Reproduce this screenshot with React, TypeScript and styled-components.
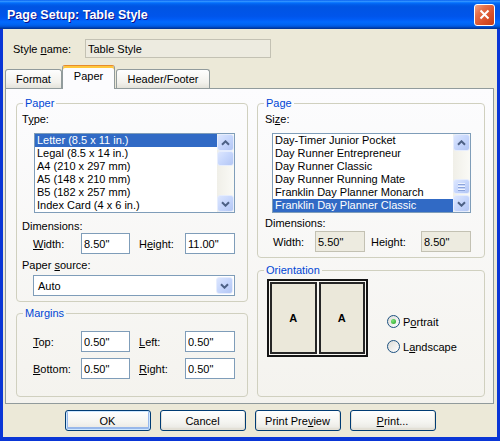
import React from "react"
import styled, { createGlobalStyle } from "styled-components"

const GlobalStyle = createGlobalStyle`
    html, body { margin: 0; padding: 0; }
    body {
        font-family: "Liberation Sans", Arial, sans-serif;
        font-size: 11px;
        color: #000;
    }
    *, *::before, *::after { box-sizing: border-box; }
`

const paperTypes = [
    "Letter (8.5 x 11 in.)",
    "Legal (8.5 x 14 in.)",
    "A4 (210 x 297 mm)",
    "A5 (148 x 210 mm)",
    "B5 (182 x 257 mm)",
    "Index Card (4 x 6 in.)",
]

const pageSizes = [
    "Day-Timer Junior Pocket",
    "Day Runner Entrepreneur",
    "Day Runner Classic",
    "Day Runner Running Mate",
    "Franklin Day Planner Monarch",
    "Franklin Day Planner Classic",
]

// window chrome
const Window = styled.div`
    width: 500px;
    height: 441px;
    display: flex;
    flex-direction: column;
    background: #0A36D6;
`

const TitleBar = styled.div`
    height: 29px;
    flex: none;
    display: flex;
    align-items: center;
    justify-content: space-between;
    padding: 0 5px 0 7px;
    background: linear-gradient(to bottom, #0058EE 0%, #3593FF 4%, #288EFF 6%, #127DFF 8%, #036FFC 10%,
        #0262EE 14%, #0057E5 20%, #0054E3 24%, #0055EB 56%, #005BF5 66%, #026AFE 76%,
        #0062EF 86%, #0052D6 92%, #0040AB 96%, #003092 100%);
`

const Title = styled.span`
    color: #fff;
    font-weight: bold;
    font-size: 12.5px;
    text-shadow: 1px 1px #0F1089;
`

const CloseButton = styled.div`
    width: 21px;
    height: 22px;
    border: 1px solid #fff;
    border-radius: 3px;
    display: grid;
    place-items: center;
    background: linear-gradient(135deg, #F3A488 0%, #E4704A 30%, #D9502A 65%, #C43C15 100%);
`

const Body = styled.div`
    flex: 1;
    margin: 0 3px 4px;
    background: #ECE9D8;
    display: flex;
    flex-direction: column;
`

const StyleRow = styled.div`
    display: flex;
    align-items: center;
    padding: 10px 0 0 10px;
`

const StyleLabel = styled.span`
    width: 72px;
`

const Key = styled.u`
    text-decoration: underline;
    text-underline-offset: 1px;
`

const TextBox = styled.input<{ $w: number; $disabled?: boolean; $h?: number }>`
    width: ${p => p.$w}px;
    height: ${p => p.$h ?? 21}px;
    margin: 0;
    padding: 0 2px;
    font: inherit;
    color: #000;
    border: 1px solid ${p => p.$disabled ? "#C3C1B3" : "#7F9DB9"};
    background: ${p => p.$disabled ? "#EDEBE0" : "#fff"};
    outline: none;
`

// tabs
const TabStrip = styled.div`
    height: 24px;
    margin: 7px 0 -1px;
    padding-left: 2px;
    display: flex;
    align-items: flex-end;
`

const Tab = styled.div<{ $w: number; $active?: boolean; $ml?: number }>`
    position: relative;
    z-index: ${p => p.$active ? 1 : 0};
    width: ${p => p.$w}px;
    height: ${p => p.$active ? 24 : 19}px;
    margin-bottom: ${p => p.$active ? 0 : 1}px;
    margin-left: ${p => p.$ml ?? 0}px;
    display: flex;
    align-items: center;
    justify-content: center;
    padding-bottom: ${p => p.$active ? 3 : 0}px;
    border: 1px solid #919B9C;
    border-bottom: none;
    border-radius: 3px 3px 0 0;
    border-top-color: ${p => p.$active ? "#E68B2C" : "#919B9C"};
    box-shadow: ${p => p.$active ? "inset 0 2px 0 #FFC73C" : "none"};
    background: ${p => p.$active ? "#FCFCFE" : "linear-gradient(#FEFEFE, #F2F1EC 70%, #E3E2DA)"};
`

const Panel = styled.div`
    height: 316px;
    margin: 0 3px 0 2px;
    border: 1px solid #919B9C;
    background: linear-gradient(#FCFCFE, #F4F3EE);
    display: grid;
    grid-template-columns: 232px 228px;
    column-gap: 9px;
    align-items: start;
    padding: 8px 8px 0 10px;
`

const Column = styled.div`
    display: flex;
    flex-direction: column;
`

// group boxes
const Group = styled.fieldset<{ $mt?: number }>`
    margin: ${p => p.$mt ?? 0}px 0 0;
    padding: 0;
    min-width: 0;
    border: 1px solid #D0D0BF;
    border-radius: 4px;
`

const Legend = styled.legend`
    margin-left: 6px;
    padding: 0 2px;
    line-height: 13px;
    color: #0046D5;
`

const PaperBody = styled.div`
    display: flex;
    flex-direction: column;
    padding: 0 12px 5px 5px;
`

const MarginsBody = styled.div`
    display: flex;
    flex-direction: column;
    padding: 0 12px 17px 5px;
`

const PageBody = styled.div`
    display: flex;
    flex-direction: column;
    padding: 0 13px 5px 7px;
`

const OrientBody = styled.div`
    display: flex;
    padding: 2px 0 39px 9px;
`

const Caption = styled.div<{ $mt: number }>`
    line-height: 13px;
    margin-top: ${p => p.$mt}px;
`

const FieldRow = styled.div<{ $mt: number; $pl: number }>`
    display: flex;
    align-items: center;
    height: 21px;
    margin-top: ${p => p.$mt}px;
    padding-left: ${p => p.$pl}px;
`

const RowLabel = styled.span<{ $w: number; $ml?: number }>`
    flex: none;
    width: ${p => p.$w}px;
    margin-left: ${p => p.$ml ?? 0}px;
`

// list box
const ListFrame = styled.div<{ $w: number; $mt: number; $ml: number }>`
    width: ${p => p.$w}px;
    height: 80px;
    margin: ${p => p.$mt}px 0 0 ${p => p.$ml}px;
    border: 1px solid #7F9DB9;
    background: #fff;
    display: flex;
`

const Items = styled.ul`
    flex: 1;
    margin: 0;
    padding: 0;
    list-style: none;
    overflow: hidden;
`

const Item = styled.li<{ $sel?: boolean }>`
    height: 13px;
    line-height: 13px;
    padding-left: 2px;
    white-space: nowrap;
    background: ${p => p.$sel ? "#316AC5" : "transparent"};
    color: ${p => p.$sel ? "#fff" : "#000"};
`

const Track = styled.div`
    width: 17px;
    flex: none;
    display: flex;
    flex-direction: column;
    background: linear-gradient(to right, #F0EFE8, #FAFAF6);
`

const ScrollKnob = styled.div<{ $h?: number; $mt?: number }>`
    height: ${p => p.$h ?? 17}px;
    margin-top: ${p => p.$mt ?? 0}px;
    flex: none;
    display: flex;
    flex-direction: column;
    align-items: center;
    justify-content: center;
    gap: 1px;
    border: 1px solid #E6EDFD;
    border-radius: 3px;
    background: linear-gradient(135deg, #DCE6FE 0%, #C6D6FC 50%, #B3C6F4 100%);
`

const Spacer = styled.div`
    flex: 1;
`

const GripLine = styled.span`
    width: 7px;
    height: 1px;
    background: #EEF3FE;
    box-shadow: 0 1px 0 #8CA4DB;
    margin-bottom: 1px;
`

const Chevron = ({ down }: { down?: boolean }) => (
    <svg width="9" height="6" viewBox="0 0 9 6">
        <path d={down ? "M1 1.2 L4.5 4.7 L8 1.2" : "M1 4.8 L4.5 1.3 L8 4.8"}
            stroke="#4D6185" strokeWidth="2" fill="none" />
    </svg>
)

const ListBox = ({ items, selected, width, mt, ml, thumbAt, grip }: {
    items: string[], selected: number, width: number, mt: number, ml: number, thumbAt: number, grip?: boolean,
}) => (
    <ListFrame $w={width} $mt={mt} $ml={ml}>
        <Items>
            {items.map((it, i) => <Item key={it} $sel={i === selected}>{it}</Item>)}
        </Items>
        <Track>
            <ScrollKnob><Chevron /></ScrollKnob>
            <ScrollKnob $h={15} $mt={thumbAt}>
                {grip && <><GripLine /><GripLine /><GripLine /></>}
            </ScrollKnob>
            <Spacer />
            <ScrollKnob><Chevron down /></ScrollKnob>
        </Track>
    </ListFrame>
)

// combo box
const Combo = styled.div`
    width: 202px;
    height: 21px;
    margin: 3px 0 0 11px;
    border: 1px solid #7F9DB9;
    background: #fff;
    display: flex;
    align-items: center;
    padding: 1px;
`

const ComboText = styled.span`
    flex: 1;
    padding-left: 3px;
`

const ComboButton = styled(ScrollKnob)`
    width: 17px;
    height: 17px;
`

// orientation
const Preview = styled.div`
    width: 101px;
    height: 78px;
    flex: none;
    border: 2px solid #141414;
    padding: 1px;
    display: flex;
    gap: 2px;
    background: #F8F7F2;
`

const Sheet = styled.div`
    flex: 1;
    border: 2px solid #262626;
    background: #EBE8DA;
    display: grid;
    place-items: center;
    font-weight: bold;
`

const RadioList = styled.div`
    display: flex;
    flex-direction: column;
    gap: 12px;
    padding: 36px 0 0 19px;
`

const RadioRow = styled.label`
    display: flex;
    align-items: center;
    height: 13px;
    gap: 3px;
`

const RadioDot = styled.span<{ $on?: boolean }>`
    width: 13px;
    height: 13px;
    flex: none;
    border-radius: 50%;
    border: 1px solid #1C5180;
    background: linear-gradient(135deg, #DCDCD7, #FFFFFF);
    display: grid;
    place-items: center;
    &::after {
        content: "";
        width: 5px;
        height: 5px;
        border-radius: 50%;
        background: ${p => p.$on ? "radial-gradient(circle at 35% 35%, #7FE57B, #21A121)" : "transparent"};
    }
`

// dialog buttons
const ButtonRow = styled.div`
    flex: 1;
    display: flex;
    justify-content: center;
    align-items: flex-start;
    gap: 9px;
    padding-top: 6px;
`

const Button = styled.button<{ $default?: boolean }>`
    width: 86px;
    height: 21px;
    margin: 0;
    padding: 0;
    font: inherit;
    color: #000;
    border: 1px solid #003C74;
    border-radius: 3px;
    background: linear-gradient(#FFFFFF, #F4F4F0 60%, #ECEBE6 85%, #D6D0C5);
    box-shadow: ${p => p.$default
        ? "inset 0 0 0 1px #CEE7FF, inset 0 -1px 0 2px #98B8EA"
        : "inset 0 -1px 0 1px #E3E0D6"};
`

export default function App() {
    return (
        <>
            <GlobalStyle />
            <Window>
                <TitleBar>
                    <Title>Page Setup: Table Style</Title>
                    <CloseButton>
                        <svg width="11" height="11" viewBox="0 0 11 11">
                            <path d="M1.5 1.5 L9.5 9.5 M9.5 1.5 L1.5 9.5" stroke="#fff" strokeWidth="2" />
                        </svg>
                    </CloseButton>
                </TitleBar>
                <Body>
                    <StyleRow>
                        <StyleLabel>Style <Key>n</Key>ame:</StyleLabel>
                        <TextBox $w={186} $h={19} $disabled readOnly value="Table Style" />
                    </StyleRow>

                    <TabStrip>
                        <Tab $w={57}>Format</Tab>
                        <Tab $w={53} $active>Paper</Tab>
                        <Tab $w={94} $ml={1}>Header/Footer</Tab>
                    </TabStrip>

                    <Panel>
                        <Column>
                            <Group>
                                <Legend>Paper</Legend>
                                <PaperBody>
                                    <Caption $mt={3}>T<Key>y</Key>pe:</Caption>
                                    <ListBox items={paperTypes} selected={0} width={201} mt={7} ml={12} thumbAt={0} />
                                    <Caption $mt={7}>Dimensions:</Caption>
                                    <FieldRow $mt={0} $pl={11}>
                                        <RowLabel $w={48}><Key>W</Key>idth:</RowLabel>
                                        <TextBox $w={49} readOnly value={'8.50"'} />
                                        <RowLabel $w={46} $ml={9}>H<Key>e</Key>ight:</RowLabel>
                                        <TextBox $w={50} readOnly value={'11.00"'} />
                                    </FieldRow>
                                    <Caption $mt={5}>Paper <Key>s</Key>ource:</Caption>
                                    <Combo>
                                        <ComboText>Auto</ComboText>
                                        <ComboButton><Chevron down /></ComboButton>
                                    </Combo>
                                </PaperBody>
                            </Group>

                            <Group $mt={5}>
                                <Legend>Margins</Legend>
                                <MarginsBody>
                                    <FieldRow $mt={11} $pl={11}>
                                        <RowLabel $w={48}><Key>T</Key>op:</RowLabel>
                                        <TextBox $w={49} readOnly value={'0.50"'} />
                                        <RowLabel $w={46} $ml={9}><Key>L</Key>eft:</RowLabel>
                                        <TextBox $w={50} readOnly value={'0.50"'} />
                                    </FieldRow>
                                    <FieldRow $mt={6} $pl={11}>
                                        <RowLabel $w={48}><Key>B</Key>ottom:</RowLabel>
                                        <TextBox $w={49} readOnly value={'0.50"'} />
                                        <RowLabel $w={46} $ml={9}><Key>R</Key>ight:</RowLabel>
                                        <TextBox $w={50} readOnly value={'0.50"'} />
                                    </FieldRow>
                                </MarginsBody>
                            </Group>
                        </Column>

                        <Column>
                            <Group>
                                <Legend>Page</Legend>
                                <PageBody>
                                    <Caption $mt={3}>Si<Key>z</Key>e:</Caption>
                                    <ListBox items={pageSizes} selected={5} width={199} mt={7} ml={7} thumbAt={28} grip />
                                    <Caption $mt={4}>Dimensions:</Caption>
                                    <FieldRow $mt={1} $pl={8}>
                                        <RowLabel $w={42}>Width:</RowLabel>
                                        <TextBox $w={50} $disabled readOnly value={'5.50"'} />
                                        <RowLabel $w={50} $ml={6}>Height:</RowLabel>
                                        <TextBox $w={50} $disabled readOnly value={'8.50"'} />
                                    </FieldRow>
                                </PageBody>
                            </Group>

                            <Group $mt={6}>
                                <Legend>Orientation</Legend>
                                <OrientBody>
                                    <Preview>
                                        <Sheet>A</Sheet>
                                        <Sheet>A</Sheet>
                                    </Preview>
                                    <RadioList>
                                        <RadioRow><RadioDot $on /><span>P<Key>o</Key>rtrait</span></RadioRow>
                                        <RadioRow><RadioDot /><span>L<Key>a</Key>ndscape</span></RadioRow>
                                    </RadioList>
                                </OrientBody>
                            </Group>
                        </Column>
                    </Panel>

                    <ButtonRow>
                        <Button $default>OK</Button>
                        <Button>Cancel</Button>
                        <Button>Print Pre<Key>v</Key>iew</Button>
                        <Button><Key>P</Key>rint...</Button>
                    </ButtonRow>
                </Body>
            </Window>
        </>
    )
}
